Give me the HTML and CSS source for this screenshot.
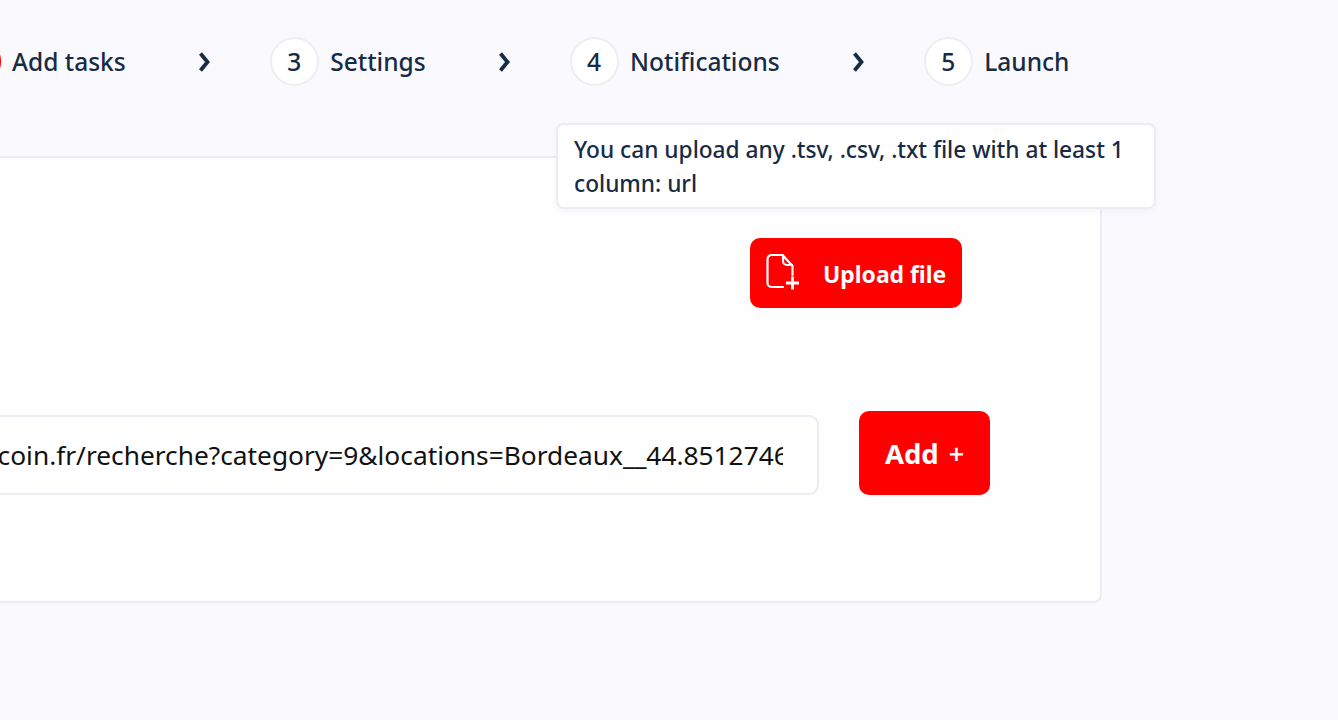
FILE: index.html
```html
<!DOCTYPE html>
<html lang="en">
<head>
<meta charset="utf-8">
<title>Add tasks</title>
<link rel="stylesheet" href="styles.css">
</head>
<body>
<div class="stage">
  <nav class="steps">
    <div class="step"><span class="num num-active">2</span><span class="label">Add tasks</span></div>
    <div class="sep"><svg class="chev" viewBox="0 0 14 20"><path d="M2.500 1.500 9.500 10 2.500 18.500"/></svg></div>
    <div class="step"><span class="num">3</span><span class="label">Settings</span></div>
    <div class="sep"><svg class="chev" viewBox="0 0 14 20"><path d="M2.500 1.500 9.500 10 2.500 18.500"/></svg></div>
    <div class="step"><span class="num">4</span><span class="label">Notifications</span></div>
    <div class="sep"><svg class="chev" viewBox="0 0 14 20"><path d="M2.500 1.500 9.500 10 2.500 18.500"/></svg></div>
    <div class="step"><span class="num">5</span><span class="label">Launch</span></div>
  </nav>
  <section class="card">
    <div class="upload-row">
      <div class="upload-wrap">
        <div class="tooltip">You can upload any .tsv, .csv, .txt file with at least 1 column: url</div>
        <button class="btn btn-upload" type="button">
          <svg class="file-icon" viewBox="0 0 36 38" fill="none"><path d="M17 33H5.500a4 4 0 0 1-4-4V5a4 4 0 0 1 4-4H16.500L26.500 12V21"/><path d="M17 1.500V7a4 4 0 0 0 4 4H26"/><path class="plus-mark" d="M26.500 22.500V35.500M20 29H33"/></svg>
          <span class="upload-text">Upload file</span>
        </button>
      </div>
    </div>
    <div class="add-row">
      <input class="url-input" type="text" value="https://www.leboncoin.fr/recherche?category=9&amp;locations=Bordeaux__44.85127460">
      <button class="btn btn-add" type="button">Add<span class="plus">+</span></button>
    </div>
  </section>
</div>
</body>
</html>
```
FILE: styles.css
```css
* { box-sizing: border-box; }
html, body { margin: 0; height: 100%; }
body {
  background: #fafafe;
  overflow: hidden;
  font-family: "Noto Sans", "Open Sans", sans-serif;
  color: #172b45;
}
.stage { width: 1362px; margin-left: -260px; padding-top: 37px; }
.steps { display: flex; align-items: center; height: 49px; margin-left: 212px; }
.step { display: flex; align-items: center; gap: 11px; flex: none; }
.num {
  width: 49px; height: 49px; padding: 0 1px 0 0; border-radius: 50%;
  display: flex; align-items: center; justify-content: center;
  background: #fff; border: 2px solid #eeeef2;
  font-size: 24.5px; font-weight: 500;
}
.num-active { background: #f00; border-color: #f00; color: #fff; }
.label { font-size: 24.5px; font-weight: 500; line-height: 50px; white-space: nowrap; }
.sep { width: 144.5px; flex: none; padding-left: 72.5px; display: flex; align-items: center; }
.chev { width: 14px; height: 20px; fill: none; stroke: #172b45; stroke-width: 3.8; }
.card {
  margin-top: 70px; height: 447px;
  background: #fefefe; border: 2px solid #ecedf2; border-radius: 8px;
  padding: 80px 110px 0 0;
}
.upload-row { display: flex; justify-content: flex-end; padding-right: 28px; }
.upload-wrap { position: relative; }
.tooltip {
  position: absolute; left: 50%; top: -115px; transform: translateX(-50%);
  width: 600px; height: 86px; padding: 8px 16px;
  background: #fff; border: 2px solid #ecedf2; border-radius: 8px;
  box-shadow: 0 2px 6px rgba(23,43,69,.05);
  font-size: 22.7px; font-weight: 500; line-height: 34px;
}
.btn { background: #f00; color: #fff; border: 0; font-family: inherit; font-weight: 700; }
.btn-upload {
  width: 212px; height: 70px; border-radius: 10px;
  display: flex; align-items: center; gap: 21px; padding: 0 0 0 16px;
  font-size: 22.9px;
}
.upload-text { padding-top: 2px; }
.file-icon { width: 36px; height: 38px; margin-bottom: 1px; stroke: #fff; stroke-width: 2.2; stroke-linecap: round; stroke-linejoin: round; flex: none; }
.plus-mark { stroke-width: 2.8; stroke-linecap: butt; }
.add-row { display: flex; align-items: flex-end; gap: 40px; margin-top: 103px; }
.url-input {
  flex: 1; min-width: 0; height: 80px;
  padding: 0 34px 0 25px;
  border: 2px solid #ecedf2; border-radius: 10px; background: #fff;
  font-family: inherit; font-size: 26.3px; color: #111; outline: 0;
}
.btn-add { width: 131px; height: 84px; padding: 0; border-radius: 10px; font-size: 27.5px; flex: none; }
.plus { margin-left: 10px; font-size: 27px; font-weight: 600; }
```
